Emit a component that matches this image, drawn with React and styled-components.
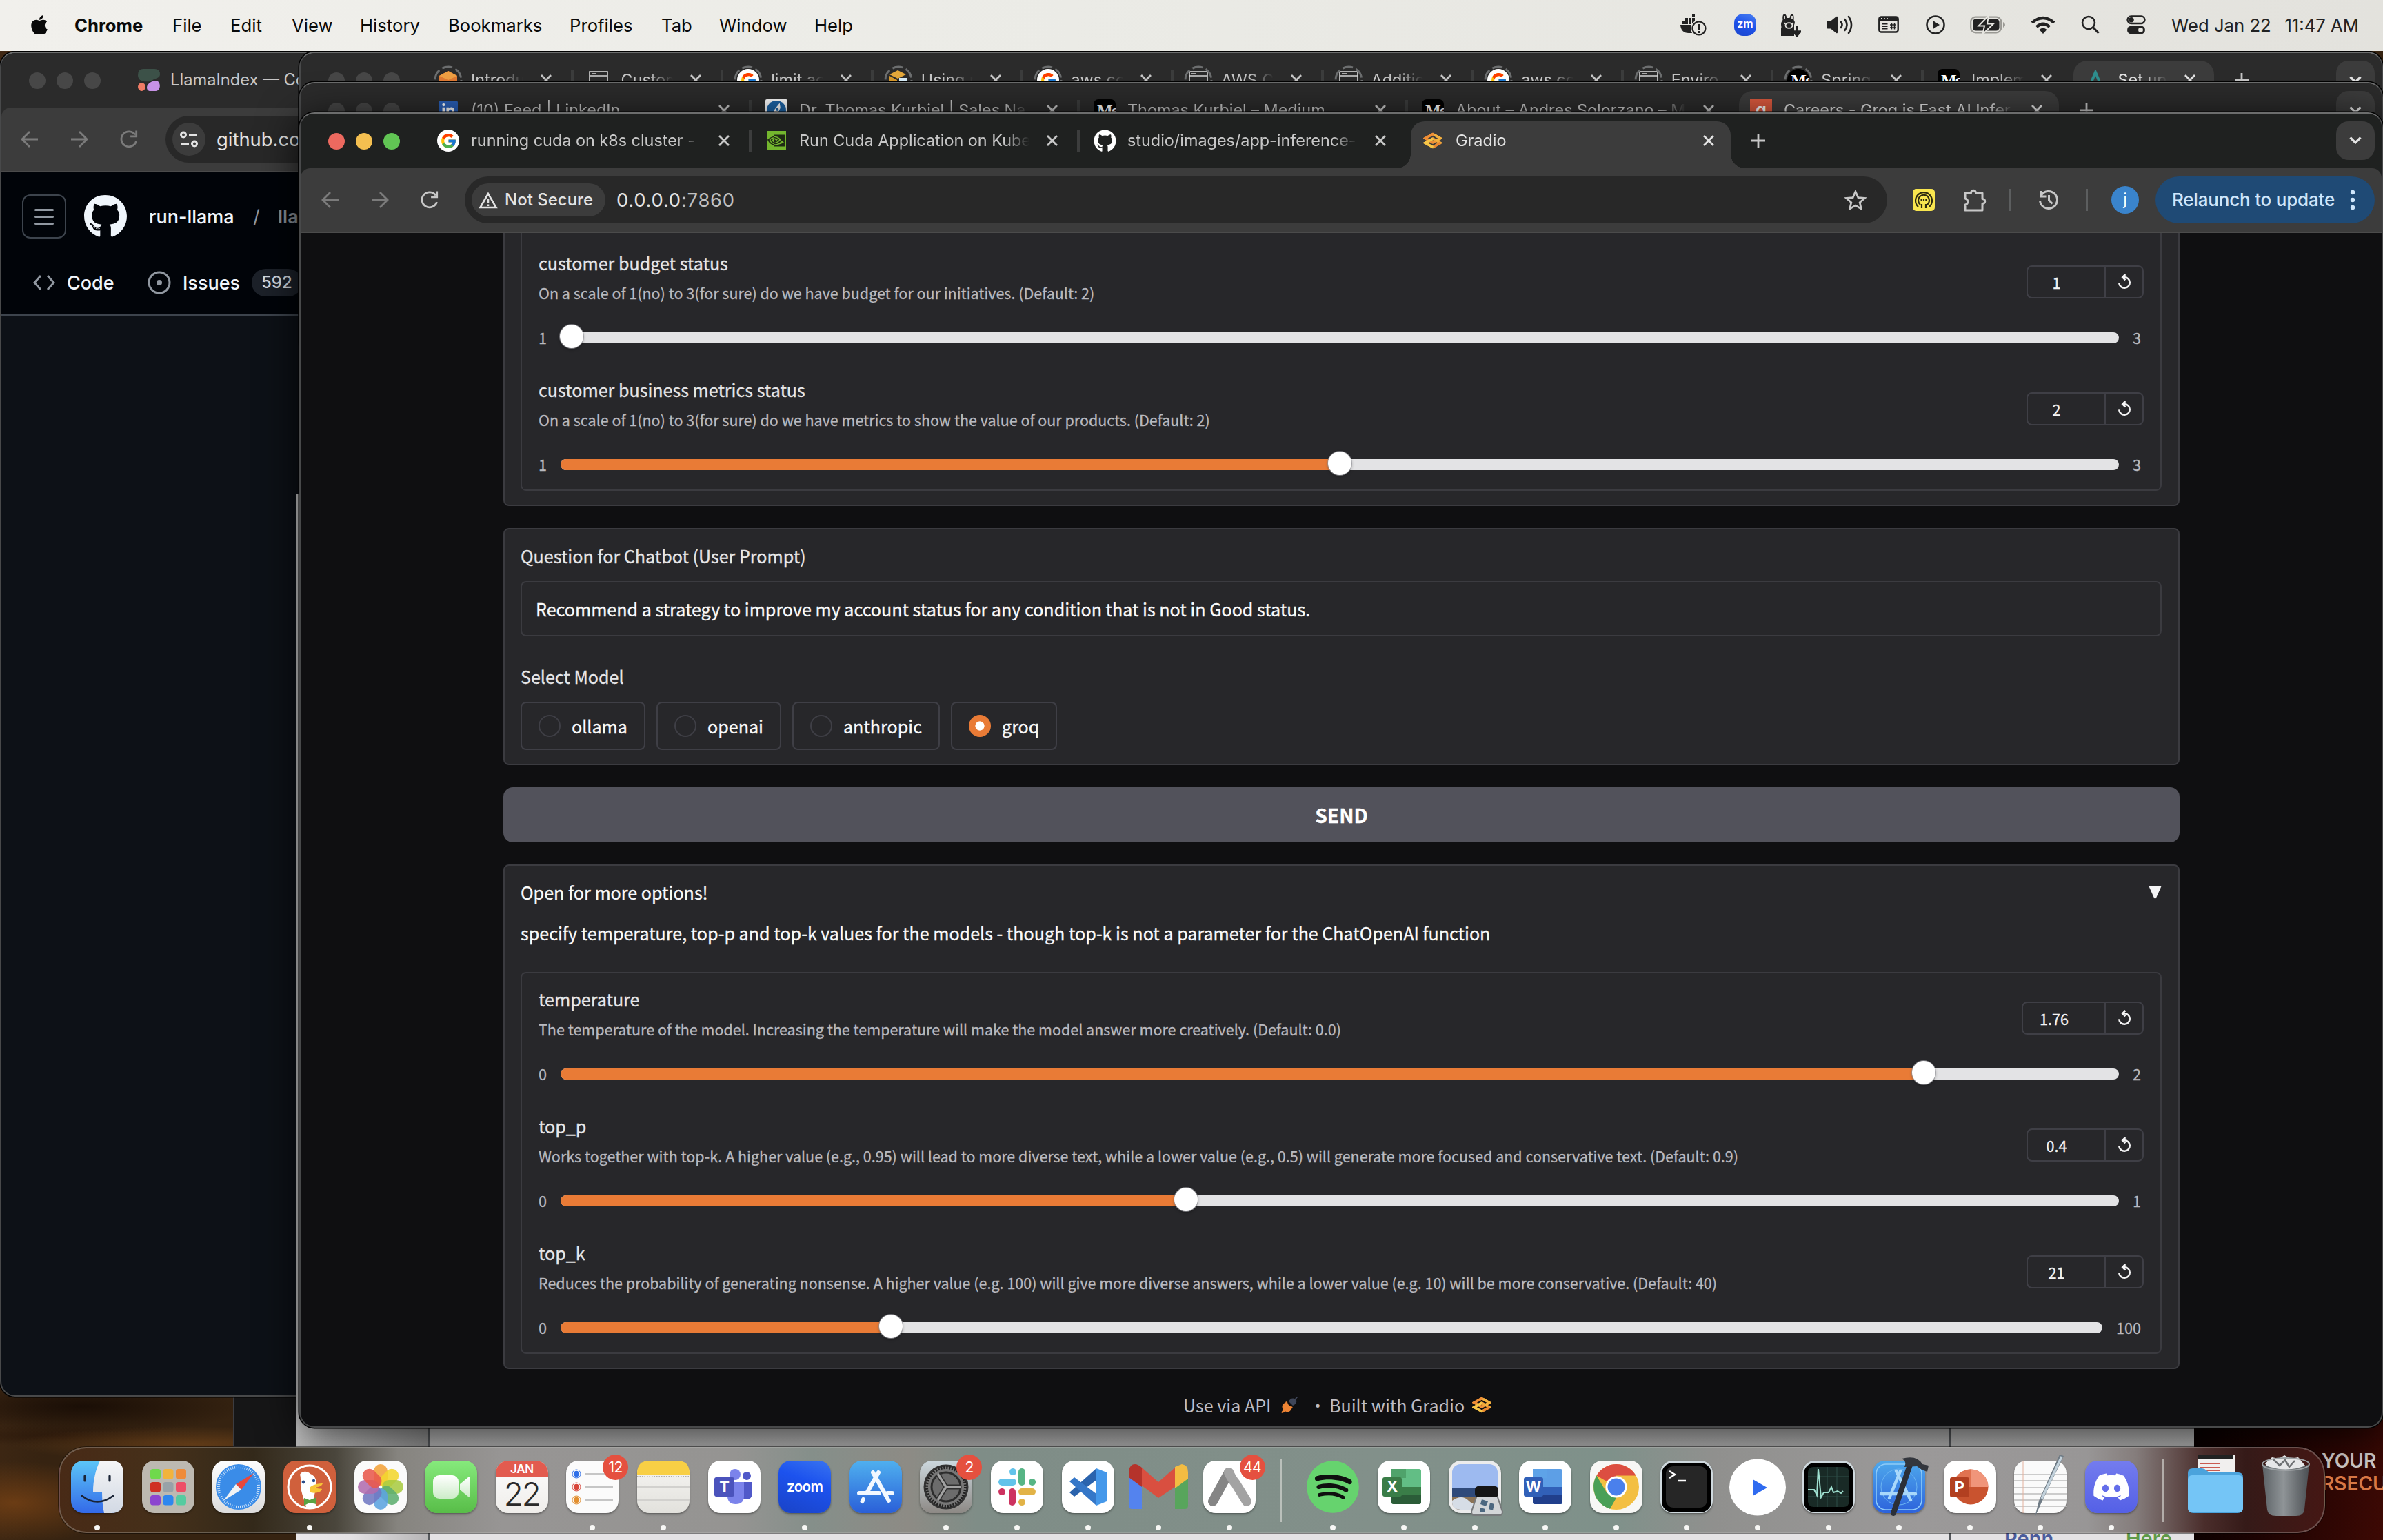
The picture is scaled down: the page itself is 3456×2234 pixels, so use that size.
import React from "react";
import styled, { createGlobalStyle, css } from "styled-components";
import { FaApple, FaGithub, FaDiscord, FaSpotify, FaLinkedinIn } from "react-icons/fa";
import { FcGoogle } from "react-icons/fc";
import { SiNvidia } from "react-icons/si";

const ui = `Inter, "Liberation Sans", sans-serif`;
const sans = `"Noto Sans CJK SC", "Noto Sans", sans-serif`;

const Global = createGlobalStyle`
  *, *::before, *::after { box-sizing: border-box; }
  body { margin: 0; background: #000; overflow: hidden; }
  svg { display: block; flex: none; }
`;

/* ---------- desktop ---------- */
const Desktop = styled.main`
  position: relative;
  width: 3456px;
  height: 2234px;
  overflow: hidden;
  font-family: ${ui};
  background:
    radial-gradient(ellipse 240px 40px at 120px 2040px, #1a0e06, transparent),
    radial-gradient(ellipse 260px 26px at 280px 2095px, #5f3a17, transparent),
    radial-gradient(ellipse 200px 16px at 90px 2082px, #2c190b, transparent),
    radial-gradient(ellipse 160px 60px at 20px 2180px, #6b3c14, transparent),
    linear-gradient(100deg, #3f2713 0, #4e3018 180px, #362311 430px);
`;

const MenuBar = styled.header`
  position: absolute;
  inset: 0 0 auto 0;
  z-index: 9;
  height: 74px;
  padding: 0 35px 2px 41px;
  display: flex;
  align-items: center;
  justify-content: space-between;
  background: linear-gradient(90deg, #f1f0ec, #ebebe6 45%, #e3e2dd);
  color: #0a0a0a;
  font-size: 25.7px;
`;
const Menus = styled.nav`
  display: flex;
  align-items: center;
`;
const MenuItem = styled.span`
  width: ${(p) => p.$w}px;
  white-space: nowrap;
  font-weight: ${(p) => (p.$bold ? 700 : 400)};
`;
const Status = styled.div`
  display: flex;
  align-items: center;
  color: #222;
`;
const StatusSlot = styled.span`
  display: flex;
  justify-content: center;
  width: ${(p) => p.$w}px;
  margin-left: ${(p) => p.$ml || 0}px;
`;
const ZoomDot = styled.span`
  width: 32px;
  height: 32px;
  border-radius: 13px;
  background: linear-gradient(200deg, #4a80f0, #1f52ea 50%, #1c46cc);
  color: #fff;
  font: 600 16px/29px ${ui};
  text-align: center;
`;
const Clock = styled.span`
  width: 272px;
  margin-left: 37px;
  display: flex;
  justify-content: space-between;
  white-space: nowrap;
`;

/* ---------- windows ---------- */
const Window = styled.section`
  position: absolute;
  left: ${(p) => p.$x}px;
  top: ${(p) => p.$y}px;
  width: ${(p) => p.$w}px;
  height: ${(p) => p.$h}px;
  border: 2px solid #48494a;
  border-top-color: #6c6d6d;
  border-radius: 22px;
  overflow: hidden;
  display: flex;
  flex-direction: column;
  background: ${(p) => p.$bg};
  box-shadow: 0 0 0 1.5px #000${(p) => (p.$glow ? ", 0 10px 60px rgba(0,0,0,.8)" : "")};
`;
const Strip = styled.div`
  flex: none;
  height: 79px;
  padding-top: 11px;
  display: flex;
  align-items: flex-start;
  background: ${(p) => (p.$front ? "#1f2120" : "#2b2b2b")};
`;
const Lights = styled.div`
  flex: none;
  width: ${(p) => p.$w}px;
  height: 57px;
  padding-left: 40px;
  display: flex;
  align-items: center;
  gap: 16px;
`;
const Light = styled.i`
  width: 24px;
  height: 24px;
  border-radius: 50%;
  background: ${(p) => p.$c};
`;
const flare = css`
  content: "";
  position: absolute;
  bottom: 0;
  width: 20px;
  height: 20px;
`;
const TabBox = styled.div`
  position: relative;
  flex: none;
  width: ${(p) => p.$w}px;
  height: 56px;
  padding-left: 22px;
  padding-right: 27px;
  display: flex;
  align-items: center;
  color: #c7c7c7;
  ${(p) =>
    !p.$last &&
    !p.$active &&
    css`
      &::after {
        content: "";
        position: absolute;
        right: -2px;
        top: 13px;
        width: 4px;
        height: 32px;
        background: #3c3d3d;
      }
    `}
  ${(p) =>
    p.$active &&
    css`
      width: ${p.$w - p.$inset * 2}px;
      height: 68px;
      margin: 0 ${p.$inset}px;
      padding: 0 ${p.$inset > 3 ? 21 : 24}px 12px 16px;
      border-radius: 20px 20px 0 0;
      background: #3c3c3c;
      color: #e3e3e3;
      &::before { ${flare} left: -20px; background: radial-gradient(circle at 0 0, transparent 19.5px, #3c3c3c 20px); }
      &::after { ${flare} right: -20px; background: radial-gradient(circle at 100% 0, transparent 19.5px, #3c3c3c 20px); }
    `}
`;
const TabIcon = styled.span`
  position: relative;
  flex: none;
  width: 32px;
  height: 32px;
  margin-right: 17px;
  display: flex;
  align-items: center;
  justify-content: center;
`;
const Throbber = styled.svg`
  position: absolute;
  left: -5px;
  top: -5px;
`;
const TabTitle = styled.span`
  flex: 1;
  min-width: 0;
  overflow: hidden;
  white-space: nowrap;
  font-size: 23.4px;
  line-height: 32px;
  mask-image: linear-gradient(90deg, #000 calc(100% - 36px), transparent);
`;
const CloseSlot = styled.span`
  width: 22px;
  margin-left: 22px;
  display: flex;
  justify-content: center;
`;
const PlusSlot = styled.span`
  height: 56px;
  margin-left: ${(p) => p.$ml}px;
  display: flex;
  align-items: center;
`;
const Chevron = styled.span`
  width: 56px;
  height: 56px;
  margin-left: auto;
  margin-right: 10px;
  border-radius: 18px;
  background: #3c3c3c;
  display: flex;
  align-items: center;
  justify-content: center;
`;
const Toolbar = styled.div`
  flex: none;
  height: 94px;
  padding: 0 10px 0 ${(p) => (p.$tight ? 27 : 29)}px;
  display: flex;
  align-items: center;
  background: #3c3c3c;
  border-bottom: 2px solid #4b4b4b;
  border-radius: 14px 14px 0 0;
`;
const ToolbarBack = styled.div`
  flex: none;
  background: ${(p) => (p.$front ? "#1f2120" : "#2b2b2b")};
`;
const NavIcon = styled.span`
  flex: none;
  width: 28px;
  margin-right: 44px;
  display: flex;
  justify-content: center;
`;
const Omnibox = styled.div`
  height: 68px;
  width: ${(p) => p.$w}px;
  margin-left: ${(p) => p.$ml}px;
  padding: 0 30px 0 10px;
  border-radius: 34px;
  background: #282828;
  display: flex;
  align-items: center;
  flex: none;
`;
const SecureChip = styled.span`
  width: 194px;
  height: 48px;
  padding-left: 10px;
  border-radius: 24px;
  background: #3c3c3c;
  display: flex;
  align-items: center;
  gap: 10px;
  color: #e3e3e3;
  font: 500 24px/30px ${ui};
  white-space: nowrap;
`;
const SiteChip = styled.span`
  width: 48px;
  height: 48px;
  border-radius: 50%;
  background: #3c3c3c;
  display: flex;
  align-items: center;
  justify-content: center;
`;
const Url = styled.span`
  flex: 1;
  margin-left: 16px;
  color: #e3e3e3;
  font-size: 27.4px;
  line-height: 34px;
  white-space: nowrap;
  letter-spacing: ${(p) => p.$ls || 0}px;
  em { font-style: normal; color: #c0c0c0; }
`;
const ToolSlot = styled.span`
  flex: none;
  width: ${(p) => p.$w}px;
  margin-left: ${(p) => p.$ml}px;
  display: flex;
  justify-content: center;
`;
const Divider = styled.i`
  flex: none;
  width: 3px;
  height: 32px;
  margin-left: ${(p) => p.$ml}px;
  background: #5c5e5f;
`;
const Avatar = styled.span`
  flex: none;
  width: 40px;
  height: 40px;
  margin-left: 34px;
  border-radius: 50%;
  background: #3a84cc;
  color: #fff;
  font: 400 23px/38px ${ui};
  text-align: center;
`;
const Relaunch = styled.button`
  flex: none;
  width: 318px;
  height: 68px;
  margin: 0 0 0 24px;
  padding: 0 28px 0 24px;
  border: 0;
  border-radius: 34px;
  background: #1f4a75;
  color: #cfe6fb;
  display: flex;
  align-items: center;
  justify-content: space-between;
  font: 500 26px/32px ${ui};
  letter-spacing: -0.2px;
  white-space: nowrap;
`;

/* ---------- GitHub page ---------- */
const RepoHeader = styled.div`
  height: 208px;
  flex: none;
  border-bottom: 2px solid #3d444d;
  background: #010409;
  padding: 32px 0 0 30px;
  color: #f0f6fc;
  font-size: 27px;
`;
const RepoRow = styled.div`
  height: 64px;
  display: flex;
  align-items: center;
  white-space: nowrap;
`;
const Burger = styled.span`
  flex: none;
  width: 64px;
  height: 64px;
  margin-right: 25px;
  border: 2px solid #3d444d;
  border-radius: 12px;
  display: flex;
  flex-direction: column;
  align-items: center;
  justify-content: center;
  gap: 7px;
  i { width: 28px; height: 3px; border-radius: 2px; background: #9198a1; }
`;
const RepoText = styled.span`
  flex: none;
  margin-left: ${(p) => p.$ml || 0}px;
  width: ${(p) => (p.$w ? `${p.$w}px` : "auto")};
  color: ${(p) => p.$c || "#f0f6fc"};
  font-weight: ${(p) => p.$fw || 500};
`;
const RepoNav = styled.div`
  margin: 32px 0 0 16px;
  height: 64px;
  display: flex;
  align-items: center;
  white-space: nowrap;
`;
const Count = styled.span`
  margin-left: 14px;
  padding: 0 14px;
  height: 40px;
  border-radius: 20px;
  background: #1c2129;
  color: #d5dbe2;
  font: 500 24px/40px ${ui};
`;

/* ---------- Gradio page ---------- */
const Page = styled.div`
  flex: 1;
  width: 2431px;
  margin: 0 auto;
  position: relative;
  left: 0.5px;
  font-family: ${sans};
  font-size: 25.09px;
  line-height: 30px;
  color: #f4f4f5;
  -webkit-text-stroke: 0.3px;
`;
const Panel = styled.div`
  margin-top: 32px;
  padding: 23px 24px 20px 23px;
  border: 2px solid #3b3b40;
  border-radius: 8px;
  background: #27272a;
  ${(p) => p.$cut && css`margin-top: 0; padding-top: 0; border-top: 0; border-radius: 0 0 8px 8px;`}
`;
const Frame = styled.div`
  border: 2px solid #3b3b40;
  border-radius: 8px;
  overflow: hidden;
  ${(p) => p.$cut && css`padding-top: 6px; border-top: 0; border-radius: 0 0 8px 8px;`}
  > :last-child { height: 182px; }
`;
const Block = styled.div`
  height: 184px;
  padding: 22px 24px 0 24px;
`;
const BlockHead = styled.div`
  display: flex;
  justify-content: space-between;
  height: 74px;
`;
const Label = styled.div`
  white-space: nowrap;
  color: #e6e6e8;
`;
const Info = styled.div`
  margin-top: 15px;
  font-size: 21.49px;
  line-height: 28px;
  white-space: nowrap;
  color: #b9b9bf;
`;
const NumberBox = styled.div`
  flex: none;
  width: ${(p) => p.$w}px;
  height: 48px;
  margin-top: 19px;
  border: 2px solid #3f3f46;
  border-radius: 8px;
  display: flex;
  font-size: 21.6px;
  line-height: 46px;
  color: #f4f4f5;
`;
const NumberValue = styled.span`
  flex: 1;
  padding-right: 28px;
  text-align: center;
`;
const ResetButton = styled.span`
  width: 55px;
  border-left: 2px solid #3f3f46;
  display: flex;
  align-items: center;
  justify-content: center;
`;
const SliderRow = styled.div`
  margin-top: 36px;
  height: 28px;
  padding-right: 4px;
  display: flex;
  align-items: center;
  gap: 20px;
  font-size: 21.6px;
  line-height: 26px;
  color: #b9b9bf;
`;
const Track = styled.div`
  position: relative;
  flex: 1;
  height: 16px;
  border-radius: 8px;
  background: #e3e3e5;
`;
const Fill = styled.div`
  height: 100%;
  border-radius: 8px 0 0 8px;
  background: #e97b36;
`;
const Thumb = styled.div`
  position: absolute;
  top: -11px;
  width: 34px;
  height: 34px;
  margin-left: -17px;
  border-radius: 50%;
  background: #fff;
  box-shadow: 0 0 0 1px rgba(150, 150, 155, 0.7), 0 2px 4px rgba(0, 0, 0, 0.35);
`;
const Prompt = styled.div`
  height: 80px;
  margin: 22px 0 43px;
  padding: 0 20px;
  border: 2px solid #3b3b40;
  border-radius: 8px;
  line-height: 77px;
  white-space: nowrap;
  color: #fafafa;
`;
const Radios = styled.div`
  margin-top: 22px;
  display: flex;
  gap: 16px;
`;
const Radio = styled.div`
  width: ${(p) => p.$w}px;
  height: 70px;
  padding-left: 24px;
  border: 2px solid #3f3f46;
  border-radius: 8px;
  display: flex;
  align-items: center;
  gap: 16px;
  color: #fafafa;
  &::before {
    content: "";
    width: 32px;
    height: 32px;
    border-radius: 50%;
    border: 2px solid #3f3f46;
    ${(p) =>
      p.$on &&
      css`
        border: 0;
        background: radial-gradient(circle, #fff 6.2px, #e97b36 7px);
      `}
  }
`;
const Send = styled.button`
  display: block;
  width: 100%;
  height: 80px;
  margin-top: 32px;
  padding: 0;
  border: 0;
  border-radius: 14px;
  background: #52525b;
  color: #fff;
  font: 700 28.4px/78px ${sans};
`;
const AccordionHead = styled.div`
  display: flex;
  justify-content: space-between;
  align-items: center;
  color: #fafafa;
`;
const Note = styled.p`
  margin: 29px 0 42px;
  white-space: nowrap;
  color: #fafafa;
`;
const Footer = styled.footer`
  margin-top: 37px;
  padding-left: 986px;
  display: flex;
  align-items: center;
  white-space: nowrap;
  color: #bcbcc3;
  -webkit-text-stroke: 0;
`;
const FooterItem = styled.span`
  width: ${(p) => p.$w}px;
  text-align: ${(p) => (p.$center ? "center" : "left")};
`;

/* ---------- things behind the windows ---------- */
const Poster = styled.div`
  position: absolute;
  left: 3182px;
  top: 2060px;
  width: 274px;
  height: 174px;
  padding: 43px 0 0 185px;
  background: linear-gradient(100deg, #080000, #1c0302 40%, #3d0904);
  font: 600 28px/33px ${ui};
  white-space: nowrap;
  color: #d0cac8;
  div + div { color: #d97745; }
`;
const DarkWindow = styled.div`
  position: absolute;
  left: 338px;
  top: 1900px;
  width: 120px;
  height: 199px;
  border: 2px solid #3c3c40;
  background: #161617;
`;
const Sheet = styled.div`
  position: absolute;
  left: 430px;
  top: 716px;
  width: 2752px;
  height: 1518px;
  display: grid;
  grid-template-columns: 193px 2206px 353px;
  background: linear-gradient(#c8c8c8 1355px, #b2b2b2 1383px, #e4e2e4 1508px);
`;
const SheetCol = styled.div`
  border-right: 2px solid #55585c;
  background: ${(p) => (p.$shade ? "linear-gradient(90deg, rgba(255,255,255,.22), transparent 40%, rgba(0,0,0,.2))" : "none")};
  padding: ${(p) => p.$pad || 0};
  display: flex;
  align-items: flex-end;
  &:last-child { border: 0; align-items: flex-start; }
`;
const Banner = styled.div`
  width: 1395px;
  height: 12px;
  margin-left: 443px;
  background:
    linear-gradient(90deg, transparent 182px, #8a6242 183px, #c9a58a 220px, #7a5336 270px, transparent 282px),
    linear-gradient(115deg, #235e52 68px, #4f8562 70px, #4f8562 180px, #47796a 181px, #47796a 330px, #275f55 332px, #275f55 365px, #47796a 367px, #47796a 830px, #235e52 832px, #235e52 1130px, #47796a 1132px);
`;
const Logo = styled.span`
  width: ${(p) => p.$w}px;
  color: ${(p) => p.$c};
  font: 600 29px/36px ${ui};
`;

/* ---------- dock ---------- */
const Dock = styled.div`
  position: absolute;
  left: 85px;
  top: 2099px;
  z-index: 5;
  width: 3287px;
  height: 125px;
  padding: 0 3px;
  border: 2px solid rgba(200, 200, 195, 0.32);
  border-radius: 40px;
  box-shadow: 0 0 0 1px rgba(0, 0, 0, 0.45);
  display: flex;
  background: linear-gradient(90deg, #482a16 0, #45301a 150px, #33291a 280px, #4a463c 400px, #86847f 490px, #979594 640px, #959492 980px, #858f8a 1090px, #8d8b85 1230px, #7f8d87 1330px, #82908a 1900px, #7f918a 2250px, #90908e 2400px, #9b9999 2700px, #989696 2940px, #857d7c 3010px, #4a2d2b 3110px, #351a18 3170px, #451714 3287px);
`;
const Slot = styled.div`
  position: relative;
  flex: none;
  width: 102.6px;
  height: 100%;
  padding-top: 18px;
  display: flex;
  flex-direction: column;
  align-items: center;
  ${(p) =>
    p.$open &&
    css`
      &::after {
        content: "";
        width: 8px;
        height: 8px;
        margin-top: 17px;
        border-radius: 50%;
        background: #f7f7f5;
      }
    `}
`;
const DockRule = styled.i`
  flex: none;
  width: 2px;
  height: 92px;
  margin: 15px 23px 0;
  background: rgba(225, 225, 220, 0.6);
`;
const Tile = styled.div`
  position: relative;
  flex: none;
  width: 76px;
  height: 76px;
  border-radius: 18px;
  background: ${(p) => p.$bg};
  box-shadow: ${(p) => (p.$flat ? "none" : "0 2px 3px rgba(0,0,0,.35)")};
  display: flex;
  align-items: center;
  justify-content: center;
  color: #fff;
`;
const Badge = styled.span`
  position: absolute;
  left: 66px;
  top: 9px;
  width: 37px;
  height: 37px;
  border-radius: 50%;
  background: #e5503f;
  color: #fff;
  font: 400 21px/37px ${ui};
  letter-spacing: -0.5px;
  text-align: center;
`;
const ZoomWord = styled.b`
  font: 600 20.5px/24px ${ui};
  letter-spacing: -0.6px;
`;
const Calendar = styled.div`
  width: 100%;
  height: 100%;
  border-radius: 18px;
  overflow: hidden;
  text-align: center;
  background: linear-gradient(#fdfdfd, #efedea);
  color: #2a2a2a;
  font: 300 46px/48px ${ui};
  letter-spacing: -2px;
  b { display: block; height: 24px; background: #e25b4f; color: #fff; font: 600 17px/25px ${ui}; letter-spacing: -0.4px; }
`;

/* ---------- small drawings ---------- */
const Cross = ({ c = "#c7c7c7" }) => (
  <svg width="18" height="18" viewBox="0 0 18 18" stroke={c} strokeWidth="2.8"><path d="M2 2l14 14M16 2L2 16" /></svg>
);
const Plus = () => (
  <svg width="22" height="22" viewBox="0 0 22 22" stroke="#c7c7c7" strokeWidth="2.8"><path d="M11 1v20M1 11h20" /></svg>
);
const Caret = () => (
  <svg width="20" height="14" viewBox="0 0 20 14" fill="none" stroke="#e3e3e3" strokeWidth="3.2"><path d="M2.5 2.5l7.5 7.5 7.5-7.5" /></svg>
);
const Arrow = ({ flip, c }) => (
  <svg width="28" height="28" viewBox="0 0 28 28" fill="none" stroke={c} strokeWidth="2.8">
    <path d={flip ? "M14 3l11 11-11 11M25 14H2" : "M14 3L3 14l11 11M3 14h23"} />
  </svg>
);
const Reload = ({ c }) => (
  <svg width="28" height="28" viewBox="0 0 28 28" fill="none" stroke={c} strokeWidth="2.8">
    <path d="M24.5 17A11 11 0 1 1 23 7.5M24.7 1.5v8.3h-8.6" />
  </svg>
);
const GradioMark = ({ s = 28 }) => (
  <svg width={s} height={s * 0.86} viewBox="0 0 28 24" fill="none" strokeWidth="3.6">
    <path d="M14 2.500L3 8.700l11 6.200 11-6.200z" stroke="#f0963a" />
    <path d="M3 15.300L14 21.500l11-6.200L14 9.100z" stroke="#f2a83a" />
    <path d="M14 2.500L3 8.700l11 6.200" stroke="#ee8d35" />
    <path d="M14 21.500L3 15.300 14 9.100" stroke="#f6c648" />
    <path d="M16 3.500l9 5.200-6 3.400" stroke="#f3b23f" />
    <path d="M25 15.300l-9 5.200" stroke="#e98631" />
  </svg>
);
const Globe = () => (
  <svg width="28" height="28" viewBox="0 0 28 28" fill="none" stroke="#d8d8d8" strokeWidth="1.6">
    <rect x="1" y="2" width="26" height="24" /><path d="M1 8h26M4 5h7" /><path d="M6 17l5 5-5 4" />
  </svg>
);
const AwsBox = () => (
  <svg width="28" height="28" viewBox="0 0 28 28"><path d="M14 1l13 7v13l-13 6L1 21V8z" fill="#e07a33" /><path d="M14 1l13 7-13 6L1 8z" fill="#efa043" /></svg>
);
const CubeBox = () => (
  <svg width="30" height="30" viewBox="0 0 30 30"><path d="M14 1l12 6-12 6L2 7z" fill="#e5a93b" /><path d="M2 9l11 6v14L2 22z" fill="#d99a2b" /><path d="M16 12h12v14l-12 4z" fill="#d7ecf8" /><path d="M19 16h7v8h-7z" fill="#3b85c4" /></svg>
);
const MediumTile = styled.span`
  width: 32px;
  height: 32px;
  border-radius: ${(p) => (p.$round ? "50%" : "7px")};
  background: #000;
  color: #fff;
  overflow: hidden;
  font: 700 24px/32px "Liberation Serif", serif;
  letter-spacing: -2px;
  padding-left: 5px;
`;
const Square = styled.span`
  width: ${(p) => p.$s}px;
  height: ${(p) => p.$s}px;
  border-radius: ${(p) => p.$r || 0}px;
  background: ${(p) => p.$bg};
  color: #fff;
  display: flex;
  align-items: center;
  justify-content: center;
  font: 600 26px/28px ${ui};
`;
const RocketDoc = () => (
  <svg width="28" height="28" viewBox="0 0 24 24"><circle cx="12" cy="12" r="12" fill="#1d65a8" /><path d="M16 3L9 12l-2 8 7-5 3-6z" fill="#fff" /><circle cx="13" cy="11" r="1.8" fill="#1d65a8" /></svg>
);
const Tri = () => (
  <svg width="30" height="30" viewBox="0 0 30 30" fill="none" stroke="#2e8f8f" strokeWidth="4"><path d="M4 30L15 4l11 26M13 30l5-12" /></svg>
);
const LlamaIndexMark = () => (
  <svg width="32" height="32" viewBox="0 0 32 32"><path d="M8 0h16q8 0 8 8c0 6-8 5-14 10Q0 20 0 9 0 0 8 0z" fill="#3c5148" /><ellipse cx="5.5" cy="26" rx="5.5" ry="6" fill="#f07c66" /><path d="M13 27c0-6 8-10 14-10 7 2 6 15-1 15H18c-3 0-5-2-5-5z" fill="#c792e6" /></svg>
);
const GoogleG = () => <Square $s={32} $r={16} $bg="#fff"><FcGoogle size={25} /></Square>;
const Reset = () => (
  <svg width="22" height="24" viewBox="0 0 24 25" fill="none" stroke="#f4f4f5" strokeWidth="2.8">
    <path d="M3.5 14A8.5 8.5 0 1 0 12 5" /><path d="M13.5 .5L9 5l4.5 4.5" />
  </svg>
);

const Tab = ({ w, icon, title, active, inset = 6, last, busy }) => (
  <TabBox $w={w} $active={active} $inset={inset} $last={last}>
    <TabIcon>
      {busy && (
        <Throbber width="42" height="42" viewBox="0 0 42 42" fill="none" stroke="#6c6e6f" strokeWidth="3"><circle cx="21" cy="21" r="19" strokeDasharray="15 5" /></Throbber>
      )}
      {icon}
    </TabIcon>
    <TabTitle>{title}</TabTitle>
    <CloseSlot><Cross c={active ? "#e3e3e3" : "#c7c7c7"} /></CloseSlot>
  </TabBox>
);
const TrafficLights = ({ on, w = 176 }) => (
  <Lights $w={w}>
    {(on ? ["#ec695f", "#f4bf50", "#61c554"] : ["#474747", "#474747", "#474747"]).map((c, i) => <Light key={i} $c={c} />)}
  </Lights>
);

const backTabs = [
  ["Introdu", <AwsBox />, true], ["Custom", <Globe />, false], ["limit ac", <GoogleG />, true], ["Using r", <CubeBox />, true],
  ["aws co", <GoogleG />, true], ["AWS C", <Globe />, true], ["Additic", <Globe />, true], ["aws co", <GoogleG />, true],
  ["Enviro", <Globe />, true], ["Spring", <MediumTile $round>Me</MediumTile>, true], ["Implem", <MediumTile>Me</MediumTile>, false], ["Set up", <Tri />, false],
];
const midTabs = [
  ["(10) Feed | LinkedIn", <Square $s={28} $r={3} $bg="#2a60b8"><FaLinkedinIn size={20} /></Square>],
  ["Dr. Thomas Kurbiel | Sales Na", <Square $s={32} $r={2} $bg="#fff"><RocketDoc /></Square>],
  ["Thomas Kurbiel – Medium", <MediumTile>Me</MediumTile>],
  ["About – Andres Solorzano – M", <MediumTile>Me</MediumTile>],
  ["Careers - Groq is Fast AI Infer", <Square $s={32} $bg="#dd5a3f">g</Square>],
];

function Slider({ label, info, min, max, value, pos, boxWidth = 170 }) {
  return (
    <Block>
      <BlockHead>
        <div>
          <Label>{label}</Label>
          <Info>{info}</Info>
        </div>
        <NumberBox $w={boxWidth}>
          <NumberValue>{value}</NumberValue>
          <ResetButton><Reset /></ResetButton>
        </NumberBox>
      </BlockHead>
      <SliderRow>
        <span>{min}</span>
        <Track>
          <Fill style={{ width: pos > 16 ? pos : 0 }} />
          <Thumb style={{ left: pos }} />
        </Track>
        <span>{max}</span>
      </SliderRow>
    </Block>
  );
}

/* ---------- dock drawings ---------- */
const S = ({ children, ...p }) => <svg width="76" height="76" viewBox="0 0 76 76" overflow="visible" {...p}>{children}</svg>;
const Finder = () => (
  <S>
    <defs><linearGradient id="fa" x2="0" y2="1"><stop stopColor="#5cc6f8" /><stop offset="1" stopColor="#3369e8" /></linearGradient><linearGradient id="fb" x2="0" y2="1"><stop stopColor="#f5f5f6" /><stop offset="1" stopColor="#d2d9e4" /></linearGradient></defs>
    <rect width="76" height="76" rx="18" fill="url(#fa)" />
    <path d="M42 0h16q18 0 18 18v40q0 18-18 18H48c-2-9-3-20-3-31H32C32 28 36 12 42 0z" fill="url(#fb)" />
    <path d="M20 22v7M56 22v7" stroke="#1a2436" strokeWidth="3.2" strokeLinecap="round" />
    <path d="M16 51q22 17 45 0" fill="none" stroke="#1a2436" strokeWidth="2.6" strokeLinecap="round" />
  </S>
);
const Launchpad = () => {
  const c = ["#6fd94c", "#f2b33c", "#ef8b38", "#cf3123", "#98a2a8", "#ee4f66", "#8c45cf", "#2f87ee", "#55cba0"];
  return <S>{c.map((f, i) => <rect key={f} x={12 + (i % 3) * 18.5} y={12 + Math.floor(i / 3) * 19} width="15" height="14.5" rx="3.5" fill={f} />)}</S>;
};
const Safari = () => (
  <S><circle cx="38" cy="38" r="33" fill="#3a8ce8" /><circle cx="38" cy="38" r="29" fill="none" stroke="#cfe4fa" strokeWidth="4" strokeDasharray="1 2.03" />
    <path d="M60 18L34 34l8 8z" fill="#e8483c" /><path d="M16 58l18-24 8 8z" fill="#f1f3f5" /></S>
);
const Duck = () => (
  <S><circle cx="38" cy="38" r="31" fill="none" stroke="#fff" strokeWidth="3" />
    <path d="M24 20c3-6 12-5 15-1 8 3 9 10 9 17l-4 18c2 6 3 10 4 13-5 2-10 2-15 0-3-12-9-24-8-36 0-5 0-8-1-11z" fill="#fff" />
    <path d="M39 38c5-4 13-5 18-5-1 4-7 5-11 6 4 2 9 1 10 2-1 6-14 7-18 4z" fill="#f7c536" /><path d="M30 54l8 3 10-4v10l-10-2-8 4z" fill="#5ba344" />
    <circle cx="29" cy="31" r="2.4" fill="#2b4d8a" /><circle cx="44" cy="29" r="2.2" fill="#2b4d8a" /></S>
);
const Photos = () => {
  const c = ["#f3a23a", "#f2d62e", "#a9cb42", "#5dae6f", "#5ba3df", "#6f78c2", "#b06cae", "#e8594c"];
  return <S>{c.map((f, i) => <rect key={f} x="28" y="5" width="20" height="31" rx="10" fill={f} opacity=".88" transform={`rotate(${i * 45} 38 38)`} />)}</S>;
};
const FaceTime = () => (
  <S><defs><linearGradient id="ft" x2="0" y2="1"><stop stopColor="#fff" /><stop offset="1" stopColor="#ccecc8" /></linearGradient></defs>
    <rect x="12" y="21" width="37" height="34" rx="9" fill="url(#ft)" /><path d="M51 34l12-10q3-1 3 2v24q0 3-3 2L51 42z" fill="url(#ft)" /></S>
);
const Reminders = () => (
  <S>{["#2f6fe8", "#d8453a", "#e28f30"].map((f, i) => (
    <g key={f}><circle cx="15" cy={19 + i * 19} r="4.2" fill={f} /><circle cx="15" cy={19 + i * 19} r="6" fill="none" stroke={f} strokeWidth="1" /><path d={`M28 ${19 + i * 19}h40`} stroke="#b5b5b5" strokeWidth="1.6" /></g>
  ))}</S>
);
const Notes = () => (
  <S><path d="M0 20V18Q0 0 18 0h40q18 0 18 18v2z" fill="#f8cf45" /><path d="M0 23h76" stroke="#999" strokeWidth="1.6" strokeDasharray="1.5 2" /><path d="M0 38h76M0 57h76" stroke="#d2d1ce" strokeWidth="1.8" /></S>
);
const Letter = ({ x, y, children, size = 22 }) => <text x={x} y={y} fill="#fff" textAnchor="middle" fontFamily="Inter, sans-serif" fontWeight="700" fontSize={size}>{children}</text>;
const Teams = () => (
  <S><circle cx="39" cy="20" r="8" fill="#7b83eb" /><circle cx="56" cy="22" r="6" fill="#5059c9" /><path d="M44 31h20v16q0 9-9 9h-6z" fill="#5059c9" /><path d="M28 31h24v20q0 12-12 12t-12-12z" fill="#7b83eb" /><rect x="9" y="24" width="29" height="28" rx="3" fill="#4b53bc" /><Letter x="23.5" y="46">T</Letter></S>
);
const AppStore = () => (
  <S fill="none" stroke="#f2f8ff" strokeWidth="6" strokeLinecap="round"><path d="M42 17L25 47M34 17l23 41M14 47h29M55 47h7M20 56l-1.500 3" /></S>
);
const Gear = () => (
  <S><circle cx="38" cy="38" r="31" fill="#777" stroke="#333" strokeWidth="3" /><circle cx="38" cy="38" r="28" fill="none" stroke="#222" strokeWidth="4" strokeDasharray="2.2 1.8" /><circle cx="38" cy="38" r="21" fill="#6c6c6c" stroke="#2c2c2c" strokeWidth="3" /><path d="M38 38L26 19M38 38L26 57M38 38h22" stroke="#303030" strokeWidth="7" /><path d="M38 38L26 19M38 38L26 57M38 38h22" stroke="#a2a2a2" strokeWidth="3.500" /></S>
);
const Slack = () => (
  <S strokeWidth="10" strokeLinecap="round"><path d="M16 31h16" stroke="#63c3ea" /><path d="M32 16v.1" stroke="#63c3ea" /><path d="M45 16v15" stroke="#57b585" /><path d="M60 31h.1" stroke="#57b585" /><path d="M45 45h15" stroke="#e2b347" /><path d="M45 60v.1" stroke="#e2b347" /><path d="M31 45v15" stroke="#cd3360" /><path d="M16 45h.1" stroke="#cd3360" /></S>
);
const Code = () => (
  <S><path d="M50 11v17L18 52l-7-6z" fill="#2a63ad" /><path d="M50 65V48L18 24l-7 6z" fill="#3577c8" /><path d="M50 11l15 6v42l-15 6z" fill="#4598ea" /></S>
);
const Gmail = () => (
  <S><path d="M-5 18v47q0 5 5 5h14V31z" fill="#5483ee" /><path d="M81 18v47q0 5-5 5H62V31z" fill="#58a55c" /><path d="M62 9l10-4q9 1 9 12v9L62 40z" fill="#f3bc42" /><path d="M-5 24V14q2-9 9-9 4 0 10 5v28z" fill="#b5332b" /><path d="M14 10l24 21 24-21v28L38 54 14 36z" fill="#d94f40" /></S>
);
const Atlas = () => (
  <S fill="none" strokeWidth="14" strokeLinecap="round"><path d="M14 59L37 17" stroke="#858585" /><path d="M37 17q6 12 10 16l16 26" stroke="#a3a3a3" /></S>
);
const Office = ({ a, b, c, d, l }) => (
  <S><rect x="20" y="12" width="43" height="51" rx="3" fill={b} /><path d="M20 12h21v13H20z" fill={a} /><path d="M20 38h43v12H20z" fill={c} /><path d="M20 50h43v10q0 3-3 3H23q-3 0-3-3z" fill={d} /><rect x="7" y="24" width="28" height="28" rx="3" fill={c} /><Letter x="21" y="45">{l}</Letter></S>
);
const Preview = () => (
  <S><rect x="5" y="5" width="66" height="66" rx="12" fill="#9dbaf0" /><path d="M5 40h66v12H5z" fill="#2f4a7a" /><path d="M5 52h66v7q0 12-12 12H17Q5 71 5 59z" fill="#8b7356" /><path d="M5 58q14-10 24 0t18-2l24 6-5 9H17Q5 70 5 60z" fill="#d6dde6" /><path d="M41 50h29l8 24q0 5-4 5H37q-4 0-4-5z" fill="#d3d6d8" stroke="#77797b" strokeWidth="2" /><rect x="38" y="37" width="34" height="16" rx="5" fill="#161616" /><path d="M48 56l9 3-3 7-8-3zM60 61l6 2-2 9-6-2zM46 68l7 2-1 5-7-1z" fill="#4d6880" /></S>
);
const Chrome = () => (
  <S><circle cx="38" cy="38" r="33" fill="#f3bf42" /><path d="M38 38L9.400 21.500A33 33 0 0 1 66.600 21.500H38z" fill="#dc4e41" /><path d="M9.400 21.500L24 46l14 8-9 15.700A33 33 0 0 1 9.400 21.500z" fill="#4aa057" /><circle cx="38" cy="38" r="15.500" fill="#fff" /><circle cx="38" cy="38" r="12.500" fill="#4a80ec" /></S>
);
const Terminal = () => (
  <S><rect width="76" height="76" rx="18" fill="#cfd9de" /><rect x="2" y="3" width="72" height="72" rx="16" fill="#000" /><rect x="8" y="8" width="60" height="60" rx="11" fill="#262626" /><path d="M13 15l8 5-8 5M25 29h12" fill="none" stroke="#fff" strokeWidth="2.6" /></S>
);
const Activity = () => (
  <S><rect width="76" height="76" rx="18" fill="#cfd9de" /><rect x="2" y="3" width="72" height="72" rx="16" fill="#000" /><rect x="8" y="9" width="60" height="58" rx="8" fill="#192a26" /><path d="M22 9v58M36 9v58M50 9v58M8 23h60M8 52h60" stroke="#2f4f48" /><path d="M8 42h9l4 8 2-38 4 41 4-7h7l4-8 3 8 6-2 5 3 3-3" fill="none" stroke="#9fe0d0" strokeWidth="2" /></S>
);
const Xcode = () => (
  <S><rect x="5" y="5" width="66" height="66" rx="14" fill="none" stroke="#8ecbf8" strokeWidth="1.600" /><circle cx="38" cy="38" r="26" fill="none" stroke="#6db6f2" /><path d="M40 15L24 54M34 15l21 42M12 48h50" stroke="#a9d8fb" strokeWidth="4.500" fill="none" strokeLinecap="round" /><path d="M54 6L30 76" stroke="#2b2f38" strokeWidth="8" strokeLinecap="round" /><path d="M42-3q22-6 30 8l9 2-2 9-8-3-7-5-18 1q4-8-4-12z" fill="#33363d" /></S>
);
const Ppt = () => (
  <S><circle cx="39" cy="38" r="25.500" fill="#c9532f" /><path d="M39 12.500A25.500 25.500 0 0 1 64.500 38H39z" fill="#f0957a" /><path d="M39 12.500A25.500 25.500 0 0 0 13.500 38H39z" fill="#e07250" /><rect x="9" y="24" width="28" height="29" rx="3" fill="#b23f20" /><Letter x="23" y="46">P</Letter></S>
);
const TextEdit = () => (
  <S><path d="M0 20h76M0 29h76M0 39h76M0 48h76M0 57h76M0 66h76" stroke="#bdbdbd" strokeWidth="1.500" /><path d="M13 0v76" stroke="#e3b09c" /><path d="M72-7L66-9 36 58 30 82 40 60z" fill="#6f7b85" /><path d="M69-6L40 55" stroke="#c3d2dc" strokeWidth="3.500" /></S>
);
const Folder = () => (
  <S width="80" viewBox="0 0 80 76"><path d="M14-8h54v34H14z" fill="#f1efee" /><path d="M14-8h52v6H14z" fill="#222" /><path d="M18 4h28M18 10h28M18 14h28" stroke="#c95b50" strokeWidth="2" /><path d="M0 18q0-7 7-7h13q4 0 7 3l4 3h42q7 0 7 7v44q0 8-8 8H8q-8 0-8-8z" fill="#4ba3dc" /><rect y="21" width="80" height="54" rx="6" fill="#74c5f6" /></S>
);
const Trash = () => (
  <S><defs><linearGradient id="tr"><stop stopColor="#5c6266" /><stop offset=".45" stopColor="#8f9497" /><stop offset="1" stopColor="#4b4f53" /></linearGradient></defs><path d="M8 4l10-9 10 2 8-5 9 5 11-2 10 12-8 6H14z" fill="#e6e6e8" /><path d="M20-2l9 9 8-8 6 10 8-9" stroke="#6f7174" fill="none" strokeWidth="2.500" /><path d="M4 5q34 15 68 0l-7 66q-1 9-12 9H24q-12 0-13-9z" fill="url(#tr)" /><ellipse cx="38" cy="5" rx="34" ry="9" fill="none" stroke="#9ea2a5" strokeWidth="2" /></S>
);

const leftDock = [
  { t: "none", g: <Finder />, o: 1 },
  { t: "#bdb9b1", g: <Launchpad /> },
  { t: "linear-gradient(#fdfdfd,#dcdcdc)", g: <Safari /> },
  { t: "#d0603c", g: <Duck />, o: 1 },
  { t: "#fbfbfb", g: <Photos /> },
  { t: "linear-gradient(#86ea7c,#58bd48)", g: <FaceTime /> },
  { t: "none", g: <Calendar><b>JAN</b>22</Calendar> },
  { t: "#fbfbfb", g: <Reminders />, o: 1, n: 12 },
  { t: "linear-gradient(#f7f6f4,#e2e1dc)", g: <Notes />, o: 1 },
  { t: "#fff", g: <Teams /> },
  { t: "linear-gradient(200deg,#3974f0,#1c52ee 40%,#1a43c6)", g: <ZoomWord>zoom</ZoomWord>, o: 1 },
  { t: "linear-gradient(#4fb0ef,#2a5fd8)", g: <AppStore /> },
  { t: "linear-gradient(#ccd8de,#8d8985)", g: <Gear />, o: 1, n: 2 },
  { t: "#fff", g: <Slack />, o: 1 },
  { t: "#fff", g: <Code />, o: 1 },
  { t: "none", g: <Gmail />, o: 1, flat: 1 },
  { t: "#fff", g: <Atlas />, o: 1, n: 44 },
];
const midDock = [
  { t: "radial-gradient(circle,#0f0f0f 34px,transparent 35px)", g: <FaSpotify size={78} color="#66d36e" />, flat: 1 },
  { t: "#fff", g: <Office a="#4fa36b" b="#62be85" c="#3a7d48" d="#2b5c38" l="X" /> },
  { t: "#ececec", g: <Preview /> },
  { t: "#fff", g: <Office a="#5ea3e8" b="#5d9fe6" c="#3160b8" d="#213f8c" l="W" /> },
  { t: "#f7f7f5", g: <Chrome /> },
  { t: "none", g: <Terminal /> },
  { t: "none", g: <S><circle cx="38" cy="38.500" r="41" fill="#fff" /><path d="M31 27l21 12-21 12z" fill="#2f6bf0" /></S>, flat: 1 },
  { t: "none", g: <Activity /> },
  { t: "linear-gradient(#4ea9ec,#2c62dc)", g: <Xcode /> },
  { t: "#fff", g: <Ppt /> },
  { t: "#fafafa", g: <TextEdit /> },
  { t: "linear-gradient(#747cee,#5460e6)", g: <FaDiscord size={56} /> },
];
const DockItem = ({ it, open }) => (
  <Slot $open={open}>
    <Tile $bg={it.t} $flat={it.flat}>{it.g}</Tile>
    {it.n && <Badge>{it.n}</Badge>}
  </Slot>
);

const menus = [["File", 84], ["Edit", 89], ["View", 99], ["History", 128], ["Bookmarks", 176], ["Profiles", 133], ["Tab", 84], ["Window", 138], ["Help", 60]];

const LeadIcon = styled.span`
  height: 56px;
  margin-right: 15px;
  display: flex;
  align-items: center;
`;
const LeadTitle = styled.span`
  height: 56px;
  font-size: 23.7px;
  line-height: 56px;
  white-space: nowrap;
  color: #c7c7c7;
`;

export default function App() {
  return (
    <Desktop>
      <Global />
      <DarkWindow />
      <Poster><div>YOUR</div><div>RSECU</div></Poster>

      <Window $x={0} $y={75} $w={470} $h={1951} $bg="#0d1117">
        <Strip>
          <TrafficLights w={198} />
          <LeadIcon><LlamaIndexMark /></LeadIcon>
          <LeadTitle>LlamaIndex — Co</LeadTitle>
        </Strip>
        <ToolbarBack>
          <Toolbar $tight>
            <NavIcon><Arrow c="#7b7b7b" /></NavIcon>
            <NavIcon><Arrow flip c="#7b7b7b" /></NavIcon>
            <NavIcon><Reload c="#7b7b7b" /></NavIcon>
            <Omnibox $w={400} $ml={-5}>
              <SiteChip>
                <svg width="26" height="24" viewBox="0 0 26 24" fill="none" stroke="#e3e3e3" strokeWidth="3"><circle cx="5" cy="5.500" r="3.500" /><path d="M13 5.500h12M1 18.500h12" /><circle cx="21" cy="18.500" r="3.500" /></svg>
              </SiteChip>
              <Url>github.co</Url>
            </Omnibox>
          </Toolbar>
        </ToolbarBack>
        <RepoHeader>
          <RepoRow>
            <Burger><i /><i /><i /></Burger>
            <FaGithub size={64} />
            <RepoText $ml={31} $w={151}>run-llama</RepoText>
            <RepoText $w={36} $fw={400} $c="#9198a1">/</RepoText>
            <RepoText $fw={600} $c="#8a9199">llama</RepoText>
          </RepoRow>
          <RepoNav>
            <svg width="32" height="24" viewBox="0 0 32 24" fill="none" stroke="#9198a1" strokeWidth="3"><path d="M11 2L2 12l9 10M21 2l9 10-9 10" /></svg>
            <RepoText $ml={17} $w={117}>Code</RepoText>
            <svg width="34" height="34" viewBox="0 0 34 34" fill="none" stroke="#9198a1" strokeWidth="3"><circle cx="17" cy="17" r="15" /><circle cx="17" cy="17" r="2.500" fill="#9198a1" /></svg>
            <RepoText $ml={17} $w={86}>Issues</RepoText>
            <Count>592</Count>
          </RepoNav>
        </RepoHeader>
      </Window>

      <Sheet>
        <SheetCol $shade />
        <SheetCol><Banner /></SheetCol>
        <SheetCol $pad="1498px 0 0 78px"><Logo $w={176} $c="#4b5c9c">Penn</Logo><Logo $c="#5f9a48">Here</Logo></SheetCol>
      </Sheet>

      <Window $x={434} $y={75} $w={3022} $h={400} $bg="#2b2b2b">
        <Strip>
          <TrafficLights />
          {backTabs.map(([t, icon, busy], i) => (
            <Tab key={i} w={i === 11 ? 206 : 217.6} title={t} icon={icon} busy={busy} active={i === 11} inset={1} last={i === 10} />
          ))}
          <PlusSlot $ml={28}><Plus /></PlusSlot>
          <Chevron><Caret /></Chevron>
        </Strip>
      </Window>

      <Window $x={434} $y={119} $w={3022} $h={400} $bg="#2b2b2b">
        <Strip>
          <TrafficLights />
          {midTabs.map(([t, icon], i) => <Tab key={t} w={476} title={t} icon={icon} active={i === 4} last={i === 3} />)}
          <PlusSlot $ml={23}><Plus /></PlusSlot>
          <Chevron><Caret /></Chevron>
        </Strip>
      </Window>

      <Window $x={434} $y={163} $w={3022} $h={1908} $bg="#0f0f11" $glow>
        <Strip $front>
          <TrafficLights on />
          <Tab w={476} icon={<GoogleG />} title="running cuda on k8s cluster - " />
          <Tab w={476} icon={<Square $s={28} $bg="#74b62e"><SiNvidia size={26} color="#1f2a14" /></Square>} title="Run Cuda Application on Kube" />
          <Tab w={476} last icon={<FaGithub size={33} color="#fff" />} title="studio/images/app-inference-" />
          <Tab w={476} active icon={<GradioMark />} title="Gradio" />
          <PlusSlot $ml={23}><Plus /></PlusSlot>
          <Chevron><Caret /></Chevron>
        </Strip>
        <ToolbarBack $front>
          <Toolbar>
            <NavIcon><Arrow c="#7b7b7b" /></NavIcon>
            <NavIcon><Arrow flip c="#7b7b7b" /></NavIcon>
            <NavIcon><Reload c="#c7c7c7" /></NavIcon>
            <Omnibox $w={2063} $ml={-7}>
              <SecureChip>
                <svg width="28" height="25" viewBox="0 0 28 25" fill="none" stroke="#e3e3e3" strokeWidth="2.600"><path d="M14 3L2.500 23h23zM14 10v6.500M14 18.500v2.500" /></svg>
                Not Secure
              </SecureChip>
              <Url $ls={0.75}>0.0.0.0<em>:7860</em></Url>
              <svg width="32" height="30" viewBox="0 0 32 30" fill="none" stroke="#c7c7c7" strokeWidth="2.800"><path d="M16 3l3.900 8.600 9.300.9-7 6.200 2.100 9.200L16 23.100l-8.300 4.800 2.100-9.200-7-6.200 9.300-.9z" /></svg>
            </Omnibox>
            <ToolSlot $w={32} $ml={37}>
              <svg width="32" height="32" viewBox="0 0 32 32" fill="none" stroke="#2d2a10" strokeWidth="2.200"><rect width="32" height="32" rx="5" fill="#f9e64f" stroke="none" /><path d="M8 26a12 12 0 1 1 16 0M11 23a8 8 0 1 1 10 0M13 28v-6M19 28v-6" /><path d="M11.500 16h9" strokeDasharray="2.200 1.200" /></svg>
            </ToolSlot>
            <ToolSlot $w={34} $ml={41}>
              <svg width="34" height="34" viewBox="0 0 34 34" fill="none" stroke="#c7c7c7" strokeWidth="3" strokeLinejoin="round"><path d="M3 7h8.500c0-5 7-5 7 0H28v8.500c5 0 5 7 0 7V32H3v-8c5-1 5-8 0-9z" /></svg>
            </ToolSlot>
            <Divider $ml={33} />
            <ToolSlot $w={32} $ml={38}>
              <svg width="32" height="32" viewBox="0 0 32 32" fill="none" stroke="#c7c7c7" strokeWidth="3"><path d="M5 10A12.500 12.500 0 1 1 3.500 17M4.500 3v8h8M16.500 9v7.500l5 5" /></svg>
            </ToolSlot>
            <Divider $ml={38} />
            <Avatar>j</Avatar>
            <Relaunch>
              Relaunch to update
              <svg width="8" height="30" viewBox="0 0 8 30" fill="#cfe6fb"><circle cx="4" cy="4" r="3.200" /><circle cx="4" cy="15" r="3.200" /><circle cx="4" cy="26" r="3.200" /></svg>
            </Relaunch>
          </Toolbar>
        </ToolbarBack>
        <Page>
          <Panel $cut>
            <Frame $cut>
              <Slider label="customer budget status" info="On a scale of 1(no) to 3(for sure) do we have budget for our initiatives. (Default: 2)" min="1" max="3" value="1" pos={16} />
              <Slider label="customer business metrics status" info="On a scale of 1(no) to 3(for sure) do we have metrics to show the value of our products. (Default: 2)" min="1" max="3" value="2" pos={1130} />
            </Frame>
          </Panel>
          <Panel>
            <Label>Question for Chatbot (User Prompt)</Label>
            <Prompt>Recommend a strategy to improve my account status for any condition that is not in Good status.</Prompt>
            <Label>Select Model</Label>
            <Radios>
              <Radio $w={181}>ollama</Radio>
              <Radio $w={181}>openai</Radio>
              <Radio $w={214}>anthropic</Radio>
              <Radio $w={154} $on>groq</Radio>
            </Radios>
          </Panel>
          <Send>SEND</Send>
          <Panel>
            <AccordionHead>
              <span>Open for more options!</span>
              <svg width="19" height="19" viewBox="0 0 18 19" fill="#f4f4f5"><path d="M1.500 0h15q2 0 1 2l-7 15.500q-1.500 2-3 0L.500 2q-1-2 1-2z" /></svg>
            </AccordionHead>
            <Note>specify temperature, top-p and top-k values for the models - though top-k is not a parameter for the ChatOpenAI function</Note>
            <Frame>
              <Slider label="temperature" info="The temperature of the model. Increasing the temperature will make the model answer more creatively. (Default: 0.0)" min="0" max="2" value="1.76" pos={1977} boxWidth={177} />
              <Slider label="top_p" info="Works together with top-k. A higher value (e.g., 0.95) will lead to more diverse text, while a lower value (e.g., 0.5) will generate more focused and conservative text. (Default: 0.9)" min="0" max="1" value="0.4" pos={907} />
              <Slider label="top_k" info="Reduces the probability of generating nonsense. A higher value (e.g. 100) will give more diverse answers, while a lower value (e.g. 10) will be more conservative. (Default: 40)" min="0" max="100" value="21" pos={479} />
            </Frame>
          </Panel>
          <Footer>
            <FooterItem $w={142}>Use via API</FooterItem>
            <FooterItem $w={36}>
              <svg width="24" height="24" viewBox="0 0 24 24"><path d="M23 0l1 1-2.500 3c2 4 0 7-4.500 9l-6-6c2-4 5-5.500 9-4z" fill="#3f4659" /><path d="M0 23l3-4c-3-5-1-9 3-10l1-2 2 1 1 3 3 3 3 .500 1 2-2 1c-1 4-5 6-9 4l-4 2.500z" fill="#ee8434" /></svg>
            </FooterItem>
            <FooterItem $w={34} $center>·</FooterItem>
            <FooterItem $w={207}>Built with Gradio</FooterItem>
            <GradioMark s={28} />
          </Footer>
        </Page>
      </Window>

      <MenuBar>
        <Menus>
          <MenuItem $w={67}><FaApple size={32} /></MenuItem>
          <MenuItem $w={142} $bold>Chrome</MenuItem>
          {menus.map(([m, w]) => <MenuItem key={m} $w={w}>{m}</MenuItem>)}
        </Menus>
        <Status>
          <StatusSlot $w={38}>
            <svg width="38" height="34" viewBox="0 0 38 34"><path d="M7 7h4v4H7zM12 7h4v4h-4zM17 7h4v4h-4zM2 12h4v4H2zM7 12h4v4H7zM12 12h4v4h-4zM17 12h4v4h-4zM17 2h4v4h-4z" fill="#222" /><path d="M0 17h22v12H12Q1 29 0 17z" fill="#222" /><circle cx="27" cy="22" r="12" fill="#e6e5e0" /><circle cx="27" cy="22" r="9.500" fill="none" stroke="#222" strokeWidth="2.200" /><path d="M27 16v8M27 26v3" stroke="#222" strokeWidth="2.800" /></svg>
          </StatusSlot>
          <StatusSlot $w={32} $ml={40}><ZoomDot>zm</ZoomDot></StatusSlot>
          <StatusSlot $w={30} $ml={35}>
            <svg width="30" height="34" viewBox="0 0 30 34"><path d="M3.500 10C3 5 3.500 1.500 6 1.500S9 5 9.500 7h4c.500-2 1-5.500 3.500-5.500S20 5 19.500 10c2 2 1.500 5 .500 7v16H1V22c1-2 0-3 0-6 0-2 1-4 2.500-6z" fill="#222" /><path d="M6 8V4M17 8V4" stroke="#e6e5e0" strokeWidth="1.800" /><ellipse cx="12.500" cy="18" rx="5" ry="3.800" fill="#222" stroke="#e6e5e0" strokeWidth="1.800" /><circle cx="6.500" cy="15" r="1.300" fill="#e6e5e0" /><circle cx="18" cy="15" r="1.300" fill="#e6e5e0" /><path d="M24 19v9M18.500 26.500h11L24 33z" fill="#222" stroke="#222" strokeWidth="2.600" /></svg>
          </StatusSlot>
          <StatusSlot $w={40} $ml={36}>
            <svg width="40" height="30" viewBox="0 0 40 30" fill="none" stroke="#222" strokeWidth="2.600" strokeLinecap="round"><path d="M1 11q0-1.500 2-1.500h4l8-6.500q2-1 2 1v22q0 2-2 1l-8-6.500H3q-2 0-2-1.500z" fill="#222" stroke="none" /><path d="M22 11q3 4 0 8M27.500 7q6 8 0 16M33 3q8 12 0 24" /></svg>
          </StatusSlot>
          <StatusSlot $w={30} $ml={36}>
            <svg width="30" height="26" viewBox="0 0 30 26" fill="none" stroke="#222" strokeWidth="2.400"><rect x="1.300" y="1.500" width="27.400" height="22" rx="3" /><path d="M2 4.500h26" strokeWidth="5" /><path d="M4 4h1.800M8 4h1.800M12 4h1.800" stroke="#e6e5e0" strokeWidth="1.800" /><path d="M5.500 11.500h8M5.500 15h8M5.500 18.500h8" strokeWidth="1.800" /><path d="M19.500 10.500v9M23.500 10.500v9M17 13h9M17 17h9" strokeWidth="1.600" /></svg>
          </StatusSlot>
          <StatusSlot $w={28} $ml={39}>
            <svg width="28" height="28" viewBox="0 0 28 28" fill="none" stroke="#222" strokeWidth="2.600"><circle cx="14" cy="14" r="12.500" /><path d="M10.500 8l9.500 6-9.500 6z" fill="#222" stroke="none" /></svg>
          </StatusSlot>
          <StatusSlot $w={51} $ml={36}>
            <svg width="51" height="26" viewBox="0 0 51 26"><rect x="1.200" y="1.700" width="44" height="22.600" rx="7" fill="none" stroke="#9a9994" strokeWidth="2.200" /><path d="M48 9q3 1.500 3 4t-3 4z" fill="#9a9994" /><rect x="4" y="4.500" width="38.500" height="17" rx="4.500" fill="#222" /><path d="M27-.500L12.500 14.500h8.500L18.500 26.500 34 11.500h-9z" fill="#222" stroke="#e6e5e0" strokeWidth="2" /></svg>
          </StatusSlot>
          <StatusSlot $w={36} $ml={37}>
            <svg width="36" height="26" viewBox="0 0 36 26" fill="none" stroke="#222" strokeWidth="4.200"><path d="M2 10q16-14 32 0M8.500 16q9.500-8.500 19 0" /><path d="M12.500 20q5.500-4.500 11 0L18 26z" fill="#222" stroke="none" /></svg>
          </StatusSlot>
          <StatusSlot $w={28} $ml={37}>
            <svg width="28" height="28" viewBox="0 0 28 28" fill="none" stroke="#222" strokeWidth="2.600"><circle cx="11" cy="11" r="9" /><path d="M17.500 17.500l8 8.500" strokeWidth="3.200" /></svg>
          </StatusSlot>
          <StatusSlot $w={28} $ml={38}>
            <svg width="28" height="28" viewBox="0 0 28 28" fill="none" stroke="#222" strokeWidth="2.400"><rect x="1.500" y="1.500" width="25" height="10.500" rx="5.250" /><circle cx="7" cy="6.750" r="2.600" fill="#222" /><rect x="1" y="15.500" width="26" height="12" rx="6" fill="#222" stroke="none" /><circle cx="20.500" cy="21.500" r="3.400" fill="#e6e5e0" stroke="none" /></svg>
          </StatusSlot>
          <Clock><span>Wed Jan 22</span><span>11:47 AM</span></Clock>
        </Status>
      </MenuBar>

      <Dock>
        {leftDock.map((it, i) => <DockItem key={i} it={it} open={it.o} />)}
        <DockRule />
        {midDock.map((it, i) => <DockItem key={i} it={it} open />)}
        <DockRule />
        <DockItem it={{ t: "none", flat: 1, g: <Folder /> }} />
        <DockItem it={{ t: "none", flat: 1, g: <Trash /> }} />
      </Dock>
    </Desktop>
  );
}
